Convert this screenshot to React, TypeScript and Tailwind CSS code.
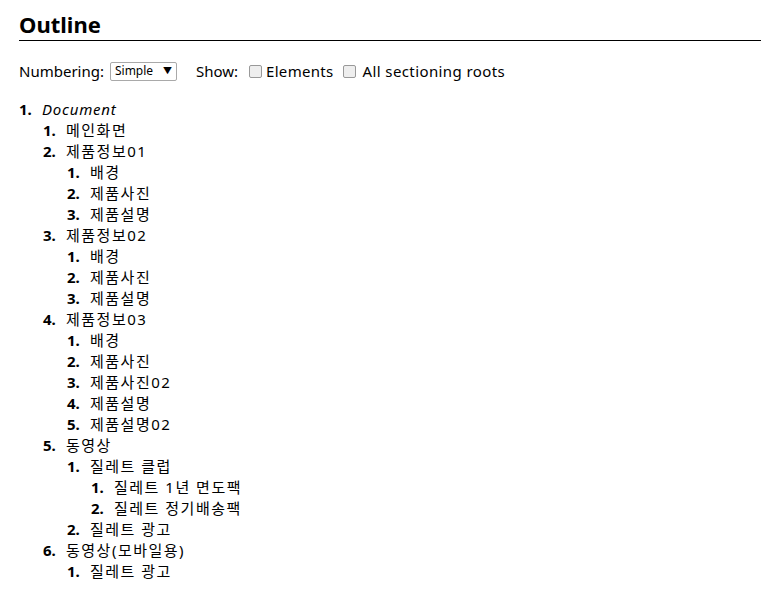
import React from 'react';

type Node = { label: string; italic?: boolean; children?: Node[] };

const tree: Node[] = [
  {
    label: 'Document',
    italic: true,
    children: [
      { label: '메인화면' },
      { label: '제품정보01', children: [{ label: '배경' }, { label: '제품사진' }, { label: '제품설명' }] },
      { label: '제품정보02', children: [{ label: '배경' }, { label: '제품사진' }, { label: '제품설명' }] },
      {
        label: '제품정보03',
        children: [
          { label: '배경' },
          { label: '제품사진' },
          { label: '제품사진02' },
          { label: '제품설명' },
          { label: '제품설명02' },
        ],
      },
      {
        label: '동영상',
        children: [
          { label: '질레트 클럽', children: [{ label: '질레트 1년 면도팩' }, { label: '질레트 정기배송팩' }] },
          { label: '질레트 광고' },
        ],
      },
      { label: '동영상(모바일용)', children: [{ label: '질레트 광고' }] },
    ],
  },
];

function Outline({ items }: { items: Node[] }) {
  return (
    <ol>
      {items.map((item, i) => (
        <li key={i}>
          <div className="flex h-[21px] items-center">
            <span className="w-[23px] shrink-0 font-bold">{i + 1}.</span>
            <span className={item.italic ? 'italic tracking-[0.8px]' : 'tracking-[1.5px]'}>{item.label}</span>
          </div>
          {item.children && (
            <div className="pl-[24px]">
              <Outline items={item.children} />
            </div>
          )}
        </li>
      ))}
    </ol>
  );
}

export default function App() {
  return (
    <div
      className="min-h-screen bg-white pl-[19px] pr-[12px] pt-[10px] text-[15px] text-black"
      style={{ fontFamily: '"Noto Sans", "Noto Sans CJK KR", sans-serif' }}
    >
      <h1 className="border-b border-black pb-[2px] text-[22px] font-bold leading-[28px]">Outline</h1>

      <div className="mt-[18px] flex h-[24px] items-center">
        <span>Numbering:</span>
        <span className="ml-[6px] flex h-[19px] w-[67px] items-center justify-between rounded-[2px] border border-[#a9a9a9] px-[4px] text-[12px]">
          <span>Simple</span>
          <span className="text-[9px]">▼</span>
        </span>
        <span className="ml-[19px]">Show:</span>
        <span className="ml-[11px] inline-block h-[13px] w-[13px] rounded-[2px] border border-[#999] bg-[#eee]" />
        <span className="ml-[4px] tracking-[0.3px]">Elements</span>
        <span className="ml-[9px] inline-block h-[13px] w-[13px] rounded-[2px] border border-[#999] bg-[#eee]" />
        <span className="ml-[7px] tracking-[0.4px]">All sectioning roots</span>
      </div>

      <div className="mt-[16px]">
        <Outline items={tree} />
      </div>
    </div>
  );
}
